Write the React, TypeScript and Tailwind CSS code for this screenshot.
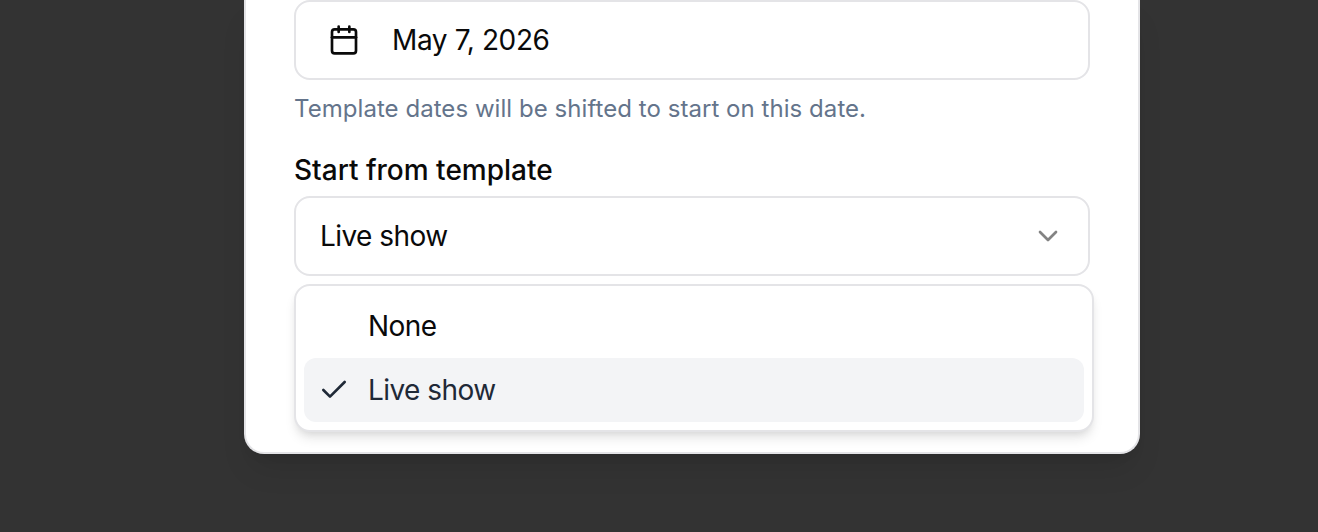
import React from "react";
import { Calendar, Check, ChevronDown } from "lucide-react";

const templates = ["None", "Live show"];
const selected = "Live show";

export default function App() {
  return (
    <div className="h-[532px] w-[1318px] overflow-hidden bg-[#333333] font-['Inter',sans-serif] text-[28px] leading-[40px] tracking-[-0.56px] text-[#0a0a0a]">
      <div className="ml-[244px] flex h-[454px] w-[896px] flex-col rounded-b-[20px] border-2 border-t-0 border-[#e4e4e7] bg-white px-12 shadow-[0_20px_30px_-6px_rgba(0,0,0,0.1),0_8px_12px_-8px_rgba(0,0,0,0.1)]">
        <button className="flex h-20 w-[796px] shrink-0 items-center rounded-2xl border-2 border-[#e4e4e7] pl-8 text-left tracking-[-0.37px]">
          <Calendar className="mr-8 size-8" strokeWidth={2} />
          May 7, 2026
        </button>
        <p className="mt-[13px] h-8 text-[24px] leading-8 tracking-[0.05px] text-[#64748b]">
          Template dates will be shifted to start on this date.
        </p>
        <label className="mt-[25px] h-10 font-medium tracking-normal">Start from template</label>
        <button className="mt-1.5 flex h-20 w-[796px] shrink-0 items-center justify-between rounded-2xl border-2 border-[#e4e4e7] pr-6 pl-6 text-left">
          {selected}
          <ChevronDown className="size-8 opacity-50" />
        </button>
        <div className="mt-2 h-[148px] w-[800px] shrink-0 rounded-2xl border-2 border-[#e4e4e7] bg-white p-2 shadow-[0_8px_12px_-2px_rgba(0,0,0,0.1),0_4px_8px_-4px_rgba(0,0,0,0.1)]">
          {templates.map((name) => (
            <div
              key={name}
              className={`flex h-16 items-center rounded-xl pl-3.5 ${name === selected ? "bg-[#f3f4f6] text-[#1f2937]" : ""}`}
            >
              <span className="mr-[18px] flex size-8 items-center">
                {name === selected && <Check className="size-8" strokeWidth={2} />}
              </span>
              {name}
            </div>
          ))}
        </div>
      </div>
    </div>
  );
}
